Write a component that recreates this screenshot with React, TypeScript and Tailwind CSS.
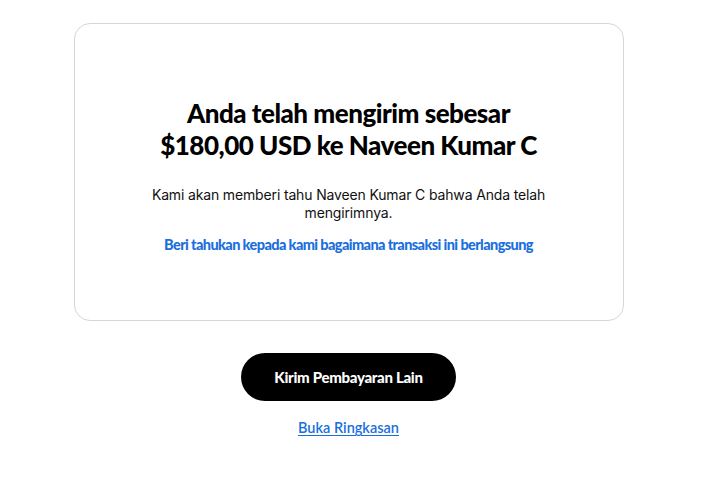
import React from "react";

export default function App() {
  return (
    <div className="min-h-[493px] bg-white font-['Lato',sans-serif] text-black">
      <div className="flex flex-col items-center pr-[23px] pt-[23px]">
        <div className="flex h-[298px] w-[550px] flex-col items-center justify-center rounded-2xl border border-[#d6d6d6] px-10 pt-[9px] text-center">
          <h1 className="max-w-[400px] text-[26px] font-black leading-[32px] tracking-[-0.5px]">
            Anda telah mengirim sebesar $180,00 USD ke Naveen Kumar C
          </h1>
          <p className="mt-[25px] max-w-[420px] font-['Inter',sans-serif] text-[14px] leading-[18px] tracking-[-0.15px] text-[#111]">
            Kami akan memberi tahu Naveen Kumar C bahwa Anda telah mengirimnya.
          </p>
          <a
            href="#"
            className="mt-[12px] text-[14.5px] font-black tracking-[-0.6px] text-[#1b6fdc]"
          >
            Beri tahukan kepada kami bagaimana transaksi ini berlangsung
          </a>
        </div>
        <button className="mt-8 h-12 w-[215px] rounded-full bg-black text-[15px] font-black tracking-[-0.3px] text-white">
          Kirim Pembayaran Lain
        </button>
        <a
          href="#"
          className="mt-4 text-[14.5px] font-semibold text-[#1b6fdc] underline underline-offset-2"
        >
          Buka Ringkasan
        </a>
      </div>
    </div>
  );
}
